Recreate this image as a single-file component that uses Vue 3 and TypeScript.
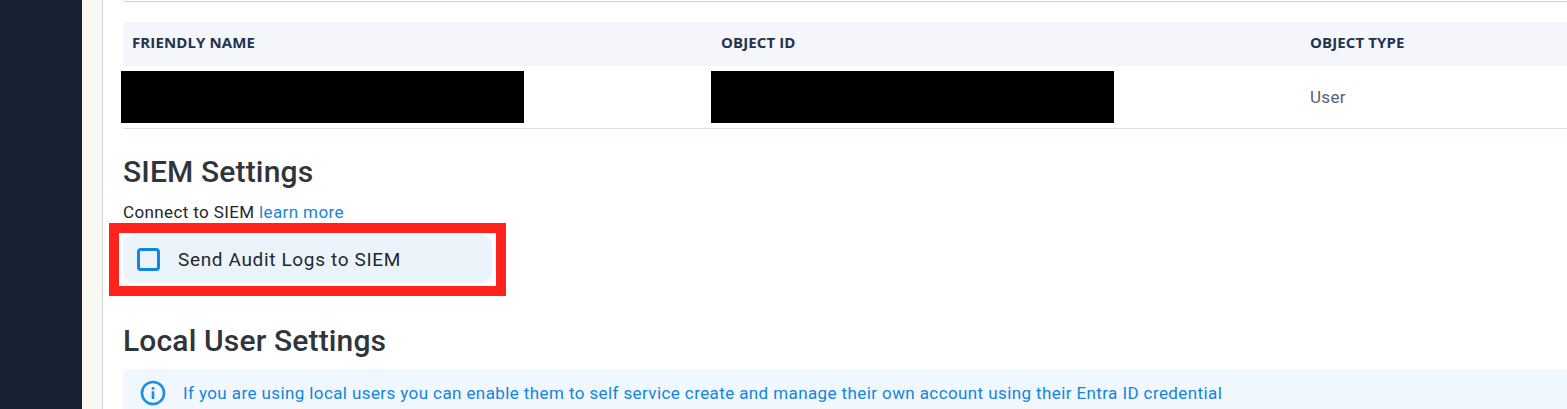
<script setup lang="ts">
const headers: string[] = ['Friendly Name', 'Object ID', 'Object Type']
</script>

<template>
  <div class="page">
    <aside class="rail"></aside>
    <div class="gutter"></div>
    <main class="content">
      <div class="card-end"></div>

      <section class="table">
        <div class="thead">
          <div v-for="h in headers" :key="h" class="th">{{ h }}</div>
        </div>
        <div class="tr">
          <div class="td"><div class="redact redact-a"></div></div>
          <div class="td"><div class="redact redact-b"></div></div>
          <div class="td user">User</div>
        </div>
      </section>

      <h2 class="title siem-title">SIEM Settings</h2>
      <p class="connect">Connect to SIEM <a class="link">learn more</a></p>

      <div class="option-wrap">
        <label class="option">
          <span class="box"></span>
          <span class="option-text">Send Audit Logs to SIEM</span>
        </label>
        <div class="highlight"></div>
      </div>

      <h2 class="title local-title">Local User Settings</h2>
      <div class="notice">
        <svg class="info" viewBox="0 0 24 24" width="26" height="26" fill="none" aria-hidden="true">
          <circle cx="12" cy="12" r="10.2" stroke="#1c8fea" stroke-width="2.4" />
          <rect x="10.8" y="10.4" width="2.4" height="7.2" fill="#1c8fea" />
          <rect x="10.8" y="6.6" width="2.4" height="2.4" fill="#1c8fea" />
        </svg>
        <span class="notice-text">If you are using local users you can enable them to self service create and manage their own account using their Entra ID credential</span>
      </div>
    </main>
  </div>
</template>

<style>
html, body { margin: 0; background: #fff; overflow: hidden; }
</style>

<style scoped>
.page {
  display: flex;
  width: 1567px;
  height: 409px;
  overflow: hidden;
  font-family: Roboto, "Liberation Sans", sans-serif;
  background: #fff;
}
.rail { flex: 0 0 82px; background: #162231; }
.gutter {
  flex: 0 0 20px;
  background: #f9f8f3;
  border-right: 1px solid #d2d2d0;
}
.content {
  flex: 1;
  min-width: 0;
  padding-left: 20px;
}
.card-end {
  height: 1px;
  border-bottom: 1px solid #cfcfcf;
  border-left: 1px solid #e4e4e4;
  border-bottom-left-radius: 4px;
}
.table { margin-top: 20px; }
.thead {
  display: grid;
  grid-template-columns: 589px 589px 1fr;
  height: 44px;
  align-items: center;
  background: #f4f6fb;
  border-top-left-radius: 5px;
}
.th {
  padding-left: 9px;
  padding-bottom: 4px;
  font-family: "Open Sans", "Noto Sans", sans-serif;
  font-size: 15px;
  font-weight: 700;
  letter-spacing: 0.1px;
  text-transform: uppercase;
  color: #24324d;
}
.tr {
  display: grid;
  grid-template-columns: 589px 589px 1fr;
  height: 63px;
  box-sizing: border-box;
  align-items: start;
  border-bottom: 1px solid #d9dfe4;
}
.td { min-width: 0; }
.redact { width: 403px; height: 52px; margin-top: 5px; background: #000; }
.redact-a { margin-left: -2px; }
.redact-b { margin-left: -1px; }
.user {
  padding-left: 9px;
  line-height: 62px;
  font-size: 17px;
  letter-spacing: 0.3px;
  color: #56627a;
}
.title {
  margin: 0;
  font-size: 30px;
  letter-spacing: 0.15px;
  line-height: 36px;
  font-weight: 500;
  color: #30343b;
}
.siem-title { margin-top: 25px; }
.connect {
  margin: 12px 0 0;
  font-size: 17px;
  letter-spacing: 0.38px;
  line-height: 20px;
  color: #22262c;
}
.link { color: #1584dc; }
.option-wrap {
  position: relative;
  width: 369px;
  margin-top: 13px;
}
.option {
  display: flex;
  align-items: center;
  height: 48px;
  padding-left: 14px;
  background: #ebf3fb;
  border-radius: 11px;
}
.box {
  flex: 0 0 auto;
  box-sizing: border-box;
  width: 23px;
  height: 23px;
  border: 3px solid #0e86e6;
  border-radius: 4px;
}
.option-text {
  margin-left: 18px;
  font-size: 19px;
  letter-spacing: 0.65px;
  color: #23282f;
}
.highlight {
  position: absolute;
  left: -14px;
  top: -12px;
  width: 397px;
  height: 73px;
  box-sizing: border-box;
  border: 10px solid #ff231c;
  pointer-events: none;
}
.local-title { margin-top: 40px; }
.notice {
  display: flex;
  align-items: center;
  height: 48px;
  margin-top: 10px;
  padding-left: 17px;
  background: #f0f7fd;
  border-radius: 6px 0 0 0;
  color: #1584dc;
}
.info { flex: 0 0 auto; }
.notice-text {
  margin-left: 17px;
  font-size: 17px;
  letter-spacing: 0.4px;
}
</style>
